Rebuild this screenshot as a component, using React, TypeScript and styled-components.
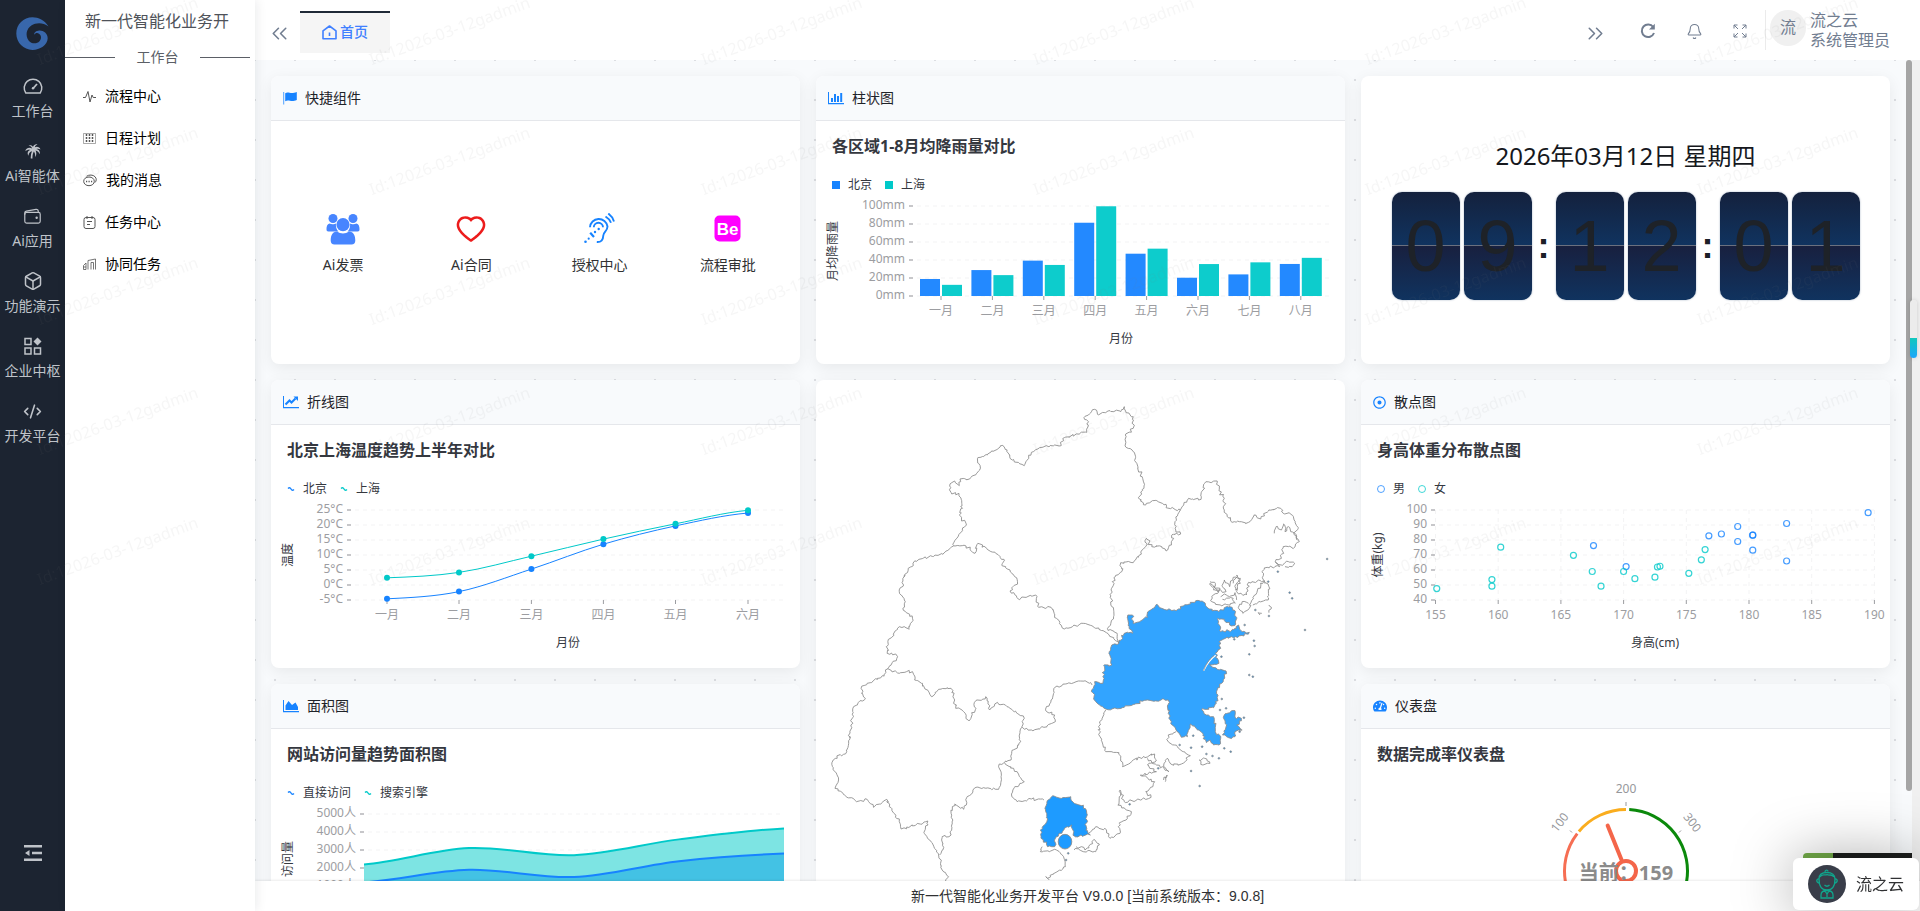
import React from "react";
import styled, { createGlobalStyle, css } from "styled-components";
import { AiOutlineHeart } from "react-icons/ai";
import { FaRegDotCircle, FaTachometerAlt } from "react-icons/fa";
import { IoWalletOutline } from "react-icons/io5";
import { Bell, Box, ChevronsLeft, ChevronsRight, CodeXml } from "lucide-react";

const BLUE = "#1783ff";
const TEAL = "#00c9c9";
const FONT = `"Noto Sans", "Noto Sans CJK SC", sans-serif`;

const GlobalStyle = createGlobalStyle`
  *, *::before, *::after { box-sizing: border-box; }
  html, body { margin: 0; padding: 0; overflow: hidden; }
  body { font-family: ${FONT}; font-size: 14px; line-height: 20px; color: #1f2329; background: #fff; }
  button { font: inherit; color: inherit; background: none; border: 0; padding: 0; cursor: pointer; }
  a { color: inherit; text-decoration: none; }
  h1, h2, h3, p, ul { margin: 0; padding: 0; font-weight: 400; }
  ul { list-style: none; }
`;

/* ---------- shell ---------- */

const Shell = styled.div`
  display: flex;
  height: 100vh;
`;

const Rail = styled.nav`
  flex: 0 0 65px;
  display: flex;
  flex-direction: column;
  align-items: center;
  background: #1c2431;
  color: #bfc3c9;
`;

const RailLogo = styled.a`
  display: flex;
  height: 76px;
  align-items: center;
  padding-bottom: 10px;
`;

const RailList = styled.ul`
  flex: 1;
  width: 100%;
`;

const RailLink = styled.a`
  display: flex;
  flex-direction: column;
  align-items: center;
  gap: 5px;
  height: 65px;
  white-space: nowrap;
`;

const RailIcon = styled.span`
  display: flex;
  align-items: center;
  justify-content: center;
  height: 20px;
`;

const FoldButton = styled.button`
  display: flex;
  padding-bottom: 50px;
`;

const SidePanel = styled.aside`
  position: relative;
  z-index: 2;
  flex: 0 0 190px;
  padding-right: 5px;
  background: #fff;
  box-shadow: 2px 0 10px rgba(0, 21, 41, 0.08);
`;

const PanelTitle = styled.h1`
  padding: 9px 20px;
  height: 46px;
  overflow: hidden;
  font-size: 16px;
  line-height: 24px;
  white-space: nowrap;
  color: #4e5259;
`;

const PanelDivider = styled.div`
  display: flex;
  align-items: center;
  justify-content: space-between;
  padding-top: 1px;
  color: #5b5f66;
  &::before,
  &::after {
    content: "";
    width: 50px;
    height: 1px;
    background: #5b5f66;
  }
`;

const PanelList = styled.ul`
  padding-top: 8px;
`;

const PanelLink = styled.a`
  display: flex;
  align-items: center;
  gap: 9px;
  height: 42px;
  padding-left: 18px;
  color: #000;
  svg { color: #555; }
`;

const Workspace = styled.div`
  flex: 1;
  min-width: 0;
  display: flex;
  flex-direction: column;
`;

const TopBar = styled.header`
  flex: 0 0 60px;
  display: flex;
  align-items: center;
  background: #fff;
  color: #717d90;
`;

const IconButton = styled.button<{ $width?: number }>`
  display: flex;
  align-items: center;
  justify-content: center;
  width: ${(p) => p.$width ?? 46}px;
  height: 60px;
  padding-top: 2px;
`;

const ScrollTabsButton = styled(IconButton)`
  padding: 6px 0 0 4px;
`;

const Tabs = styled.div`
  flex: 1;
  display: flex;
  align-self: stretch;
  padding-top: 11px;
`;

const Tab = styled.button`
  display: flex;
  align-items: center;
  justify-content: center;
  gap: 3px;
  width: 90px;
  height: 42px;
  padding-bottom: 2px;
  border-top: 2px solid #1f2937;
  background: #f5f5f5;
  color: #4080ff;
  font-weight: 500;
`;

const UserBox = styled.button`
  display: flex;
  align-items: flex-start;
  gap: 4px;
  width: 155px;
  height: 40px;
  margin-left: 2px;
  padding-left: 4px;
  border-left: 1px solid #ebebeb;
  font-size: 16px;
  line-height: 20px;
  text-align: left;
  white-space: nowrap;
`;

const UserInitial = styled.span`
  width: 36px;
  height: 36px;
  border-radius: 50%;
  background: #f0f0f0;
  line-height: 34px;
  text-align: center;
`;

const UserNames = styled.span`
  display: flex;
  flex-direction: column;
`;

const Viewport = styled.div`
  flex: 1;
  min-height: 0;
  display: flex;
`;

const Scroller = styled.main`
  flex: 1;
  min-width: 0;
  overflow: hidden;
  padding: 16px;
  background-color: #f8fafc;
  background-image: radial-gradient(circle, #dcdee2 1px, transparent 1px),
    radial-gradient(circle, #dcdee2 1px, transparent 1px);
  background-size: 40px 40px;
  background-position: -20px -20px, 0 0;
`;

const ScrollTrack = styled.div`
  flex: 0 0 6px;
  background: #f8fafc;
`;

const ScrollThumb = styled.div`
  height: 89%;
  border-radius: 3px;
  background: #a5a5a5;
`;

const OuterTrack = styled.div`
  flex: 0 0 8px;
  background: #f0f0f0;
`;

const Footer = styled.footer`
  position: relative;
  flex: 0 0 30px;
  background: #fff;
  box-shadow: 0 -1px 2px rgba(0, 0, 0, 0.08);
  font-family: "Liberation Sans", "Noto Sans CJK SC", sans-serif;
  line-height: 30px;
  text-align: center;
  color: #303133;
`;

/* ---------- cards ---------- */

const Board = styled.div`
  display: grid;
  grid-template-columns: repeat(3, minmax(0, 1fr));
  grid-auto-rows: 288px;
  gap: 16px;
`;

const Card = styled.section<{ $tall?: boolean }>`
  display: flex;
  flex-direction: column;
  overflow: hidden;
  border-radius: 8px;
  background: #fff;
  box-shadow: 0 4px 16px rgba(0, 0, 0, 0.07);
  ${(p) => p.$tall && css`grid-row: span 2;`}
`;

const CardHeader = styled.header`
  flex: 0 0 45px;
  display: flex;
  align-items: center;
  gap: 8px;
  padding: 0 12px;
  border-bottom: 1px solid #e5e7eb;
  background: #f8fafc;
  svg { color: ${BLUE}; }
`;

const CardName = styled.h2`
  font-size: 14px;
  line-height: 20px;
`;

const ChartBody = styled.div`
  padding-top: 14px;
`;

const ChartTitle = styled.h3`
  padding: 0 16px;
  font-size: 16px;
  line-height: 22px;
  font-weight: 700;
  color: #35383f;
`;

const Legend = styled.ul`
  display: flex;
  gap: 13px;
  height: 20px;
  margin: 18px 0 1px;
  padding: 0 16px;
  font-size: 12px;
  color: #35383f;
`;

const LegendItem = styled.li`
  display: flex;
  align-items: center;
  gap: 8px;
`;

const ChartSvg = styled.svg`
  display: block;
  width: 100%;
  height: auto;
  font-family: ${FONT};
  font-size: 12px;
`;

const Shortcuts = styled.ul`
  flex: 1;
  display: grid;
  grid-template-columns: repeat(4, 1fr);
  align-items: center;
  padding: 2px 8px 0;
`;

const Shortcut = styled.a`
  display: flex;
  flex-direction: column;
  align-items: center;
  gap: 10px;
  color: #303133;
`;

const ShortcutIcon = styled.span`
  display: flex;
  align-items: center;
  height: 32px;
`;

const ClockBody = styled.div`
  flex: 1;
  display: flex;
  flex-direction: column;
  align-items: center;
  justify-content: center;
  gap: 20px;
`;

const ClockDate = styled.h2`
  font-size: 24px;
  line-height: 32px;
  color: #16181d;
`;

const ClockRow = styled.div`
  display: flex;
  align-items: center;
  gap: 4px;
`;

const FlipDigit = styled.span`
  width: 68px;
  height: 108px;
  border-radius: 10px;
  background: linear-gradient(#14213d, #10335f 49%, #7c8290 49%, #5a6170 50%, #18203f 50%, #10335f);
  box-shadow: 0 0 2px rgba(16, 51, 95, 0.4);
  font-family: "Liberation Sans", sans-serif;
  font-size: 72px;
  line-height: 108px;
  text-align: center;
  color: #1e2228;
`;

const Colon = styled.span`
  width: 16px;
  font-family: "Liberation Sans", sans-serif;
  font-size: 36px;
  line-height: 36px;
  font-weight: 700;
  text-align: center;
  color: #1c2027;
`;

/* ---------- overlays ---------- */

const Watermark = styled.div`
  position: fixed;
  inset: 0;
  z-index: 5;
  overflow: hidden;
  pointer-events: none;
  display: grid;
  grid-template-columns: repeat(6, 332px);
  grid-auto-rows: 130px;
  color: rgba(128, 128, 128, 0.07);
  font-size: 16px;
  line-height: 20px;
`;

const WatermarkText = styled.span`
  padding: 49px 0 0 41px;
  white-space: nowrap;
  span {
    display: inline-block;
    transform: rotate(-20deg);
    transform-origin: left bottom;
  }
`;

const SideMeter = styled.div`
  position: fixed;
  top: 300px;
  right: 3px;
  z-index: 6;
  width: 7px;
  height: 58px;
  border-radius: 4px;
  background: linear-gradient(#ececec 38px, #12c8bd 38px, #1ba6fb);
  box-shadow: 0 0 4px rgba(0, 0, 0, 0.15);
`;

const ChatDock = styled.div`
  position: fixed;
  right: 1px;
  bottom: 1px;
  z-index: 7;
`;

const ChatProgress = styled.div`
  height: 5px;
  margin: 0 7px 0 10px;
  border-radius: 4px 0 0 0;
  background: linear-gradient(90deg, #74ad4a 30px, #1d1f1e 30px);
`;

const ChatButton = styled.button`
  display: flex;
  align-items: center;
  gap: 10px;
  width: 126px;
  height: 52px;
  padding-left: 15px;
  border-radius: 6px;
  background: #fff;
  box-shadow: 0 0 60px rgba(0, 0, 0, 0.36);
  font-size: 16px;
  color: #303133;
`;

/* ---------- icons ---------- */

const LogoIcon = () => (
  <svg width="33" height="33" viewBox="0 0 33 33" aria-hidden="true">
    <path
      fill="#3867ab"
      d="M32.500 9.500C28.500 3 22.500.3 16.500.3 7.500.3.300 7.500.300 16.500S7.500 32.900 16.500 32.900C23.800 32.900 31.500 28.500 31.700 21.300 31.600 16.200 27.500 13.300 23.200 13.500 20 13.700 17.900 15.600 18.200 17.800 19.200 15.900 21.500 15.700 23 16.700 25.600 18.300 25.600 21.700 23.500 24.200 20.700 27.300 15.300 27 12.600 23.400 9.200 18.500 10.300 12 15.300 8.600 20.500 5.300 27 5.500 32.500 9.500Z"
    />
  </svg>
);

const DashboardIcon = () => (
  <svg width="20" height="16" viewBox="0 0 20 16" fill="none" stroke="currentColor" strokeWidth="1.500" aria-hidden="true">
    <path d="M2.800 15A8.800 8.800 0 1 1 17.200 15Z" strokeLinejoin="round" />
    <path d="M10 10.500 14 6" strokeWidth="1.800" />
    <circle cx="10" cy="10.300" r="1.200" fill="currentColor" stroke="none" />
  </svg>
);

const PalmIcon = () => (
  <svg width="16" height="15" viewBox="0 0 16 15" aria-hidden="true">
    <path
      fill="currentColor"
      d="M7.200 4.500C6.500 2.500 5 1.800 3.500 1.800 4.800.8 7 1 8 2.800 8.700.7 10.800-.2 12.500.5 11 1 10.200 2 9.900 3.200 12 2 14.800 3 15.500 5.500 14 4.500 12.500 4.500 11.300 4.900 14 5.300 15.500 7.500 14.600 10.300 13.800 8 12.500 7 10.600 6.600 11.700 9 11.500 11.300 10.200 13.200 10.400 10.600 9.900 8.800 8.900 7.500 7.800 9.500 7.300 11.500 7.500 14.600H5.800C5.600 11.800 6 9.500 7 7.300 4.900 7.700 3.600 9.300 3.500 11.800 1.900 9.300 2.600 6.900 5.200 5.900 3.500 5.500 1.800 6 .4 7.300.4 4.400 4.200 2.900 7.200 4.500Z"
    />
  </svg>
);

const BlocksIcon = () => (
  <svg width="18" height="18" viewBox="0 0 18 18" fill="none" stroke="currentColor" strokeWidth="1.500" aria-hidden="true">
    <rect x="1" y="1.500" width="6" height="6" />
    <rect x="1" y="11" width="6" height="6" />
    <rect x="10.500" y="11" width="6" height="6" />
    <path d="M13.500.5 17.500 4.500 13.500 8.500 9.500 4.500Z" fill="currentColor" stroke="none" />
  </svg>
);

const FoldIcon = () => (
  <svg width="18" height="16" viewBox="0 0 18 16" fill="currentColor" aria-hidden="true">
    <path d="M0 0h18v2.500H0zM8 6.800h10v2.400H8zM0 13.500h18V16H0zM1 8l4.500-3v6z" />
  </svg>
);

const HomeIcon = () => (
  <svg width="15" height="15" viewBox="0 0 15 15" fill="none" stroke="currentColor" strokeWidth="1.600" aria-hidden="true">
    <path d="M1 5.800 7.500 1 14 5.800V13.800H1ZM7.500 7.500V11" strokeLinejoin="round" />
  </svg>
);

const RefreshIcon = () => (
  <svg width="16" height="16" viewBox="0 0 16 16" fill="none" aria-hidden="true">
    <path d="M13.200 4A6.300 6.300 0 1 0 14 10" stroke="currentColor" strokeWidth="2" />
    <path d="M14.800.8V6.500H9Z" fill="currentColor" />
  </svg>
);

const ExpandIcon = () => (
  <svg width="14" height="14" viewBox="0 0 14 14" fill="none" stroke="currentColor" aria-hidden="true">
    <path d="M4.500 1H1v3.500M1 1l4 4M9.500 1H13v3.500M13 1 9 5M4.500 13H1V9.500M1 13l4-4M9.500 13H13V9.500M13 13 9 9" />
  </svg>
);

const PulseIcon = () => (
  <svg width="13" height="13" viewBox="0 0 13 13" fill="none" stroke="currentColor" aria-hidden="true">
    <path d="M0 7.500h2.500L5 1.500 7 12 9 5l1.200 2.500H13" />
  </svg>
);

const CalendarGridIcon = () => (
  <svg width="13" height="13" viewBox="0 0 13 13" fill="none" stroke="currentColor" aria-hidden="true">
    <path d="M.5 1.500h12v10H.500z" strokeOpacity=".5" />
    <path d="M3.500 2v9M6.500 2v9M9.500 2v9" strokeDasharray="2 1" strokeWidth="1.500" />
  </svg>
);

const ChatIcon = () => (
  <svg width="14" height="13" viewBox="0 0 14 13" fill="none" stroke="currentColor" aria-hidden="true">
    <path d="M6 3C3 3 .700 4.800.700 7.300S3 11.700 6 11.700 11.300 9.800 11.300 7.300 9 3 6 3Z" />
    <path d="M3.500 2.300C6 .500 10 .600 12 2.700 13.800 4.600 13.500 7 12 8.500" />
    <path d="M3 7.500h1.200M5.500 7.500h1.200M8 7.500h1.200" strokeWidth="1.500" />
  </svg>
);

const TaskIcon = () => (
  <svg width="13" height="13" viewBox="0 0 13 13" fill="none" stroke="currentColor" aria-hidden="true">
    <rect x="1" y="1.500" width="11" height="11" rx="2" />
    <path d="M4 0v3M9 0v3M4 5.500h5M4 8.500h3" />
  </svg>
);

const TeamIcon = () => (
  <svg width="13" height="13" viewBox="0 0 13 13" fill="none" stroke="currentColor" strokeOpacity=".8" aria-hidden="true">
    <path d="M5 11.500v-9L12.500 1v10.500M8 11.500V4.500h2.500v7M.5 11.500V7.500L3 5v6.500zM.5 9h2.500" />
  </svg>
);

const FlagIcon = () => (
  <svg width="14" height="14" viewBox="0 0 14 14" fill="currentColor" aria-hidden="true">
    <path d="M.2 1h1v12.500h-1z" opacity=".75" />
    <path d="M2.200 2.200C5.500.3 7.500 3.600 13.800 1V9C8 11.600 6 8.200 2.200 10.200Z" />
  </svg>
);

const AxisIcon = ({ children }: { children: React.ReactNode }) => (
  <svg width="16" height="14" viewBox="0 0 16 14" fill="currentColor" aria-hidden="true">
    <path d="M0 1h1v11h15v1.200H0z" />
    {children}
  </svg>
);

const BarIcon = () => <AxisIcon><path d="M3 7h2v4H3zM6 3h2v8H6zM9 5h2v6H9zM12.200 2h2v9h-2z" /></AxisIcon>;
const LineIcon = () => (
  <AxisIcon>
    <path d="M2.500 9.500 6.500 5.500 8.500 7.500 12.500 3.500" fill="none" stroke="currentColor" strokeWidth="2" />
    <path d="M10.500 1.500H15V6Z" />
  </AxisIcon>
);
const AreaIcon = () => <AxisIcon><path d="M2.500 11V6.500L5.500 2 9 6 12.500 3.500 15 8V11Z" /></AxisIcon>;

const UsersIcon = () => (
  <svg width="34" height="32" viewBox="0 0 34 32" fill="#4785ff" aria-hidden="true">
    <circle cx="7" cy="5.500" r="4.500" />
    <circle cx="27" cy="5.500" r="4.500" />
    <path d="M3.500 10.500C6 12 9 11 10 10.500 9.500 14 10.500 16.500 12.500 18.500H2.500C.5 18.500.500 17 .5 16 .5 13.500 1.200 11.300 3.500 10.500ZM30.500 10.500C28 12 25 11 24 10.500 24.500 14 23.500 16.500 21.500 18.500H31.500C33.500 18.500 33.500 17 33.500 16 33.500 13.500 32.800 11.300 30.500 10.500Z" />
    <circle cx="17" cy="11.700" r="6.600" />
    <path d="M11 18.500C14.500 21 19.500 21 23 18.500 27.500 18.500 29.300 22.500 29.300 27.500 29.300 30 28 31.500 25.500 31.500H8.500C6 31.500 4.700 30 4.700 27.500 4.700 22.500 6.500 18.500 11 18.500Z" />
  </svg>
);

const EarIcon = () => (
  <svg width="31" height="31" viewBox="0 0 31 31" fill="none" stroke={BLUE} strokeWidth="1.900" aria-hidden="true">
    <path d="M6 14.300A8.800 8.800 0 0 1 23.500 13.500C23.500 18 19.500 19 19.300 22.500 19.200 27 17 29.300 12.800 29" />
    <path d="M9.800 14.300A4.600 4.600 0 0 1 19 14.300" />
    <path d="M6.200 19.800 10 24" strokeWidth="2.200" />
    <path d="M24.300.5C27 2.500 29 5 30 8.500M21.500 3.500C24 5 26 7 27 9.800" />
    <g fill={BLUE} stroke="none">
      <circle cx="1.500" cy="28.700" r="1.300" />
      <circle cx="4.700" cy="25.700" r="1.100" />
      <circle cx="11" cy="19" r="1.200" />
      <circle cx="14.700" cy="16" r="1.200" />
    </g>
  </svg>
);

const BehanceIcon = () => (
  <svg width="27" height="27" viewBox="0 0 27 27" aria-hidden="true">
    <rect x=".5" y=".5" width="26" height="26" rx="5" fill="#ff00ff" />
    <text x="13.500" y="20" textAnchor="middle" fill="#fff" fontFamily="Liberation Sans, sans-serif" fontWeight="700" fontSize="17">Be</text>
  </svg>
);

const AvatarIcon = () => (
  <svg width="38" height="38" viewBox="0 0 38 38" aria-hidden="true">
    <circle cx="19" cy="19" r="19" fill="#393d49" />
    <g fill="none" stroke="#10a58c" strokeWidth="1.300">
      <path d="M11 14C11 21 14 25 19 25S27 21 27 14C27 10 24 7.500 19 7.500S11 10 11 14Z" />
      <path d="M12 12C14 8 17 11 19 9.500 21 11 24 8.500 26 12M17 7C17 4.500 20 4.500 20 6.500M11 14C8 13.500 8 18 11.500 18M27 14C30 13.500 30 18 26.500 18M16.500 20C18 21.500 20 21.500 21.500 20" />
      <path d="M13 33V30C13 27 15.500 25.500 19 25.500S25 27 25 30V33ZM17 26 19 29 21 26M19 29V32" />
    </g>
  </svg>
);

/* ---------- charts ---------- */

const AXIS_TOP = 10;
const AXIS_BOTTOM = 100;

type Point = [number, number];

const smooth = (pts: Point[]) =>
  pts.reduce((d, [x, y], i) => {
    if (i === 0) return `M${x} ${y}`;
    const [px, py] = pts[i - 1];
    const before = pts[i - 2] ?? pts[i - 1];
    const after = pts[i + 1] ?? pts[i];
    const c1y = i === 1 ? py + (y - py) / 6 : py + (y - before[1]) / 6;
    const c2y = y - (after[1] - py) / 6;
    const dx = (x - px) / 3;
    return `${d}C${px + dx} ${c1y} ${x - dx} ${c2y} ${x} ${y}`;
  }, "");

interface FrameProps {
  labels: string[];
  left: number;
  xs: { x: number; label: string }[];
  xTitle: string;
  yTitle: string;
  titleX: number;
  verticalGrid?: boolean;
}

const Frame = ({ labels, left, xs, xTitle, yTitle, titleX, verticalGrid }: FrameProps) => (
  <g>
    {labels.map((label, i) => {
      const y = AXIS_TOP + ((AXIS_BOTTOM - AXIS_TOP) * i) / (labels.length - 1);
      return (
        <g key={label}>
          <path d={`M${left + 4} ${y}H513`} stroke="#f3f3f4" strokeDasharray="4 4" />
          <path d={`M${left - 4} ${y}H${left}`} stroke="#b4b5b8" strokeWidth="1.500" />
          <text x={left - 8} y={y + 3} textAnchor="end" fill="#9c9da1">{label}</text>
        </g>
      );
    })}
    {xs.map(({ x, label }) => (
      <g key={label}>
        {verticalGrid && <path d={`M${x} 10V100`} stroke="#f3f3f4" strokeDasharray="4 4" />}
        <path d={`M${x} 100V104`} stroke="#9c9da1" />
        <text x={x} y="119" textAnchor="middle" fill="#9c9da1">{label}</text>
      </g>
    ))}
    <text x={titleX} y="147" textAnchor="middle" fill="#35383f">{xTitle}</text>
    <text transform="translate(21 55) rotate(-90)" textAnchor="middle" fill="#35383f">{yTitle}</text>
  </g>
);

type MarkKind = "square" | "line" | "ring";

const Mark = ({ kind, color }: { kind: MarkKind; color: string }) => (
  <svg width="8" height="8" viewBox="0 0 8 8" aria-hidden="true">
    {kind === "square" && <path d="M0 0h8v8H0z" fill={color} />}
    {kind === "line" && <path d="M1 3.500C2.500 2 3.500 3 4 4S5.500 6 7 4.500" fill="none" stroke={color} strokeWidth="1.300" />}
    {kind === "ring" && <circle cx="4" cy="4" r="3.500" fill="none" stroke={color} strokeOpacity=".75" />}
  </svg>
);

const Series = ({ names, kind }: { names: [string, string]; kind: MarkKind }) => (
  <Legend>
    <LegendItem><Mark kind={kind} color={BLUE} />{names[0]}</LegendItem>
    <LegendItem><Mark kind={kind} color={TEAL} />{names[1]}</LegendItem>
  </Legend>
);

const MONTHS = ["一月", "二月", "三月", "四月", "五月", "六月", "七月", "八月"];
const BEIJING_RAIN = [18.9, 28.8, 39.3, 81.4, 47, 20.3, 24, 35.6];
const SHANGHAI_RAIN = [12.4, 23.2, 34.5, 99.7, 52.6, 35.5, 37.4, 42.4];

const RainChart = () => (
  <ChartSvg viewBox="0 0 529 160" role="img" aria-label="各区域1-8月均降雨量对比">
    <Frame
      labels={["100mm", "80mm", "60mm", "40mm", "20mm", "0mm"]}
      left={97}
      xs={MONTHS.map((label, i) => ({ x: 125 + i * 51.4, label }))}
      xTitle="月份"
      yTitle="月均降雨量"
      titleX={305}
    />
    {MONTHS.map((m, i) => {
      const a = BEIJING_RAIN[i] * 0.9;
      const b = SHANGHAI_RAIN[i] * 0.9;
      const x = 104 + i * 51.4;
      return (
        <g key={m} fillOpacity=".95">
          <rect x={x} y={AXIS_BOTTOM - a} width="20" height={a} fill={BLUE} />
          <rect x={x + 22} y={AXIS_BOTTOM - b} width="20" height={b} fill={TEAL} />
        </g>
      );
    })}
  </ChartSvg>
);

const TEMP_X = [116, 188, 260.4, 332.4, 404.5, 477];
const BEIJING_TEMP = [-4.6, -2.2, 5.3, 13.6, 19.7, 24];
const SHANGHAI_TEMP = [2.4, 4.2, 9.6, 15.3, 20.4, 24.9];

const TemperatureChart = () => (
  <ChartSvg viewBox="0 0 529 160" role="img" aria-label="北京上海温度趋势上半年对比">
    <Frame
      labels={["25°C", "20°C", "15°C", "10°C", "5°C", "0°C", "-5°C"]}
      left={80}
      xs={TEMP_X.map((x, i) => ({ x, label: MONTHS[i] }))}
      xTitle="月份"
      yTitle="温度"
      titleX={297}
    />
    {[{ data: BEIJING_TEMP, color: BLUE }, { data: SHANGHAI_TEMP, color: TEAL }].map(({ data, color }) => {
      const pts = data.map((v, i): Point => [TEMP_X[i], AXIS_BOTTOM - (v + 5) * 3]);
      return (
        <g key={color}>
          <path d={smooth(pts)} fill="none" stroke={color} />
          {pts.map(([x, y]) => <circle key={x} cx={x} cy={y} r="3" fill={color} />)}
        </g>
      );
    })}
  </ChartSvg>
);

const MEN: Point[] = [[167.6, 76.3], [170.2, 62.3], [176.8, 82.8], [177.8, 84], [179.1, 89], [179.1, 79], [180.3, 83.2], [180.3, 83.2], [180.3, 73.2], [183, 91], [183, 66], [189.5, 98.2]];
const WOMEN: Point[] = [[155.1, 47.6], [159.5, 53.6], [159.5, 49.2], [160.2, 75.2], [166, 69.8], [167.5, 59], [168.2, 49.2], [170, 59], [170.9, 54.2], [172.5, 55.2], [172.7, 62], [172.9, 62.5], [175.2, 57.8], [176.2, 66.8], [176.5, 73.6]];

const ScatterChart = () => (
  <ChartSvg viewBox="0 0 529 160" role="img" aria-label="身高体重分布散点图">
    <Frame
      labels={["100", "90", "80", "70", "60", "50", "40"]}
      left={74}
      xs={[155, 160, 165, 170, 175, 180, 185, 190].map((v) => ({ x: 74.5 + (v - 155) * 12.54, label: String(v) }))}
      xTitle="身高(cm)"
      yTitle="体重(kg)"
      titleX={294}
      verticalGrid
    />
    {[{ data: MEN, color: BLUE }, { data: WOMEN, color: TEAL }].map(({ data, color }) =>
      data.map(([h, w], i) => (
        <circle key={color + i} cx={74.5 + (h - 155) * 12.54} cy={AXIS_BOTTOM - (w - 40) * 1.5} r="3" fill="none" stroke={color} strokeOpacity=".8" strokeWidth="1.200" />
      ))
    )}
  </ChartSvg>
);

const VISIT_X = [93, 198, 303, 408, 513];
const SEARCH = [2200, 3110, 2710, 3590, 4200];
const DIRECT = [1200, 1900, 1500, 2380, 2800];

const VisitChart = () => {
  const toPoints = (data: number[]) => data.map((v, i): Point => [VISIT_X[i], AXIS_BOTTOM - v * 0.018]);
  const search = smooth(toPoints(SEARCH));
  const direct = smooth(toPoints(DIRECT));
  return (
    <ChartSvg viewBox="0 0 529 160" role="img" aria-label="网站访问量趋势面积图">
      <Frame
        labels={["5000人", "4000人", "3000人", "2000人", "1000人", "0人"]}
        left={93}
        xs={VISIT_X.map((x, i) => ({ x, label: MONTHS[i] }))}
        xTitle="月份"
        yTitle="访问量"
        titleX={305}
      />
      <path d={`${search}V100H93Z`} fill="#7de4e3" />
      <path d={`${direct}V100H93Z`} fill="#43c2e4" />
      <path d={search} fill="none" stroke={TEAL} strokeWidth="2" />
      <path d={direct} fill="none" stroke={BLUE} strokeWidth="2" />
    </ChartSvg>
  );
};

const polar = (deg: number, r: number) => {
  const a = (deg * Math.PI) / 180;
  return `${(265 + r * Math.cos(a)).toFixed(2)} ${(104 - r * Math.sin(a)).toFixed(2)}`;
};

const arc = (from: number, to: number) => `M${polar(from, 61.5)}A61.5 61.5 0 0 1 ${polar(to, 61.5)}`;

const GaugeChart = () => (
  <ChartSvg viewBox="0 -2 529 202" role="img" aria-label="数据完成率仪表盘">
    <g fill="none" strokeWidth="3">
      <path d={arc(193, 142.5)} stroke="#f66e53" />
      <path d={arc(140, 90)} stroke="#faad1e" />
      <path d={arc(87, -13)} stroke="#0b890b" />
    </g>
    <g stroke="#96979b">
      <path d="M265 35V39M209 63.500l2 2M320 63.500l-2 2" />
    </g>
    <g fill="#96979b" textAnchor="middle">
      <text x="265" y="26">200</text>
      <text transform="translate(202 58) rotate(-52)">100</text>
      <text transform="translate(328 58) rotate(52)">300</text>
    </g>
    <path d={`M${polar(112, 12)}L${polar(112, 49)}`} stroke="#f4664a" strokeWidth="4" strokeLinecap="round" />
    <circle cx="265" cy="104" r="10" fill="#fff" stroke="#f4664a" strokeWidth="4" />
    <text x="265" y="113" textAnchor="middle" fontSize="20" fontWeight="700" fill="#8b8b8b">当前：159</text>
  </ChartSvg>
);

/* ---------- map ---------- */

const parse = (s: string): Point[] => s.trim().split(/\s+/).map((p) => p.split(",").map(Number) as Point);

/* Breaks each straight run into small deterministic jags, so borders read as surveyed lines. */
const rough = (source: string, closed = false) => {
  const pts = parse(source);
  if (closed) pts.push(pts[0]);
  let seed = pts[0][0] * 31 + pts[0][1];
  const rnd = () => {
    seed = (seed * 16807 + 11) % 2147483647;
    return seed / 2147483647 - 0.5;
  };
  const out: Point[] = [pts[0]];
  for (let i = 1; i < pts.length; i++) {
    const [ax, ay] = pts[i - 1];
    const [bx, by] = pts[i];
    const len = Math.hypot(bx - ax, by - ay);
    const n = Math.max(1, Math.round(len / 6));
    for (let k = 1; k < n; k++) {
      const t = k / n;
      out.push([ax + (bx - ax) * t + rnd() * 8, ay + (by - ay) * t + rnd() * 8]);
    }
    out.push([bx, by]);
  }
  return out.map(([x, y], i) => `${i ? "L" : "M"}${x.toFixed(1)} ${y.toFixed(1)}`).join("") + (closed ? "Z" : "");
};

const NORTH_BORDERS = [
  "403,527 403,517 438,465 418,435 427,415 417,370 397,372 391,348 405,333 418,347 420,327 447,327 475,300 470,263 485,260 540,226 552,240 560,265 600,287 620,247 655,230 700,228 712,203 775,187 780,155 767,143 797,118 805,133 840,122 870,125 880,110 885,128 905,140 905,175 883,195 885,232 905,245 915,280 930,320 935,355 920,385 940,405 960,392 997,403 997,413 1037,420",
  "403,527 437,528 462,550 470,520 495,535 520,550 543,568 537,585 560,600 581,635 560,663 583,687 632,675 640,712 675,712 690,745 712,777 735,770 765,760 800,775 830,788 865,820",
  "1037,420 1022,455 1024,480 1038,492 1017,492 1012,525 997,543 985,530 957,530 942,505 940,530 905,578 870,578 873,605 855,620 843,660 845,710 850,740 833,775 860,790 865,820",
  "403,527 372,553 305,568 275,595 260,625 262,645 250,665 264,690 260,715 287,745 277,778 250,770 218,815 216,850 240,852 243,865 217,897",
  "1037,420 1060,385 1095,388 1105,340 1140,333 1145,362 1160,385 1160,420 1182,457 1228,457 1243,435 1262,447 1285,420 1318,415 1325,430 1345,432 1367,475 1355,490 1370,515 1355,533 1325,530 1320,565 1303,575 1315,590 1280,592 1265,605 1272,632 1228,637 1222,675 1200,672 1190,650 1205,625 1185,622 1175,650 1160,630 1155,650 1165,665 1140,660 1120,640 1130,660 1145,665 1125,680 1125,695 1150,705 1190,700 1185,685 1155,688",
  "1272,632 1285,650 1283,690 1260,695 1240,705",
  "1272,632 1245,675 1230,715 1212,730 1200,715 1210,695 1228,700",
  "1300,490 1305,470 1320,480 1325,462 1330,485 1340,470 1345,480 1357,490 1365,510",
  "1303,575 1320,585 1340,575 1357,580 1350,590 1330,590",
  "1120,635 1135,640 1130,650 1148,655 1140,665",
  "1150,680 1160,672 1175,680 1190,668 1195,690",
  "1185,640 1195,615 1205,640 1190,660",
  "1260,735 1255,728 1265,730",
  "1285,705 1292,712 1285,728",
];

const SOUTH_BORDERS = [
  "217,147 208,168 160,190 143,205 155,235 122,260 115,320 103,395 65,420 63,440 80,480 70,505 130,545 160,538 178,562 215,538 222,560 250,605 255,627 330,603 320,640 345,675 360,705 370,750 388,770 380,790",
  "217,147 250,160 270,155 287,155 293,180 315,190 340,230 360,208 395,205 405,240 408,265 430,275 445,303 465,265 460,248 492,230 503,270 525,247 560,265 600,295 593,322",
  "593,322 620,330 655,322 687,305 685,285 660,272 675,240 683,205 715,192 770,182 790,195",
  "593,322 585,375 565,395 563,420 530,432 535,470 528,508 465,502 440,530 430,568 405,552 395,580 400,600 395,645 370,650 372,690 363,705",
  "545,428 580,455 600,485 568,510 565,530 580,545 620,537 655,540",
  "828,270 808,320 812,350 828,395 865,398 875,440 905,420 965,402",
  "965,402 970,420 945,435 970,455 925,465 965,485 960,500 940,515 955,532 930,538 880,545 868,510 862,555 900,575 885,600 865,610 868,640 840,655 830,630 800,620 780,640",
  "945,415 970,435 1005,455 990,440 1000,415 1010,432 1040,432 1065,407 1045,395 1020,375 1000,360 1003,345 1025,335",
  "650,680 645,695 670,695 690,690 710,710 715,740 665,775 660,770 670,780",
  "740,690 760,680 770,690 795,658 810,675 800,695 765,695 745,680",
  "990,480 1000,465 995,485",
  "1090,420 1105,415 1120,430 1100,435 1090,420",
];

const BIG_REGION =
  "865,820 880,790 903,790 890,765 890,735 902,735 905,760 945,742 950,722 972,703 985,715 1020,720 1025,722 1045,708 1080,692 1098,693 1112,712 1145,725 1160,713 1182,712 1195,745 1192,762 1175,765 1160,748 1142,745 1150,785 1185,780 1200,765 1210,785 1230,787 1215,798 1180,800 1145,815 1150,835 1135,850 1145,880 1118,882 1128,892 1165,903 1157,935 1140,960 1138,1000 1130,1013 1097,1020 1110,1035 1130,1040 1135,1080 1150,1105 1145,1125 1130,1125 1120,1110 1110,1118 1095,1085 1065,1062 1057,1100 1040,1102 1025,1080 1010,1060 1003,1030 1003,990 945,990 880,1012 830,1018 800,995 788,965 797,935 820,940 822,887 845,885 838,845 845,825";
const ISLAND_REGION = "1160,1035 1175,1028 1190,1022 1190,1042 1208,1045 1195,1065 1210,1080 1190,1085 1190,1100 1172,1103 1155,1095 1165,1070 1158,1045";
const SMALL_REGION =
  "663,547 680,527 705,535 730,530 740,550 765,555 775,580 772,630 785,645 740,648 733,615 720,620 705,640 690,650 685,680 665,680 647,650 645,630 663,605 660,575";

const ISLETS = parse(
  "1448,567 1343,668 1350,685 1310,605 1283,635 1386,780 1217,765 1245,828 1230,853 1243,812 1230,915 1240,920 1152,860 1188,808 1247,720 1285,738 1153,987 1148,1020 1215,1043 1165,1015 1203,1085 1160,1135 1178,1145 1098,1130 1067,1133 1073,1097 1035,1125 1067,1203 1091,1248 1110,1152 1127,1158 1145,1165 975,1195 895,1303 723,1450 717,1470"
);

const MapChart = () => (
  <ChartSvg viewBox="0 0 529 592" role="img" aria-label="区域地图">
    <g transform="translate(-6 -10) scale(.35714 .33333)" fill="none" stroke="#8a8a8a" strokeWidth="2.500" strokeLinejoin="round">
      {NORTH_BORDERS.map((b) => <path key={b} d={rough(b)} />)}
      <path d={rough(BIG_REGION, true)} fill="#32a4ff" />
      <path d={rough(ISLAND_REGION, true)} fill="#32a4ff" />
      <path d="M1102 902C1110 885 1120 868 1136 856" stroke="#fff" strokeWidth="4" />
      <path d="M1102 902C1108 885 1115 870 1132 856" />
      {ISLETS.map(([x, y]) => <circle key={`${x}-${y}`} cx={x} cy={y} r="2.500" fill="#4a90c8" strokeWidth="2" />)}
      <g transform="translate(0 750)">
        {SOUTH_BORDERS.map((b) => <path key={b} d={rough(b)} />)}
        <path d={rough(SMALL_REGION, true)} fill="#1e9bff" />
        <ellipse cx="714" cy="665" rx="19" ry="22" fill="#1e9bff" />
      </g>
    </g>
  </ChartSvg>
);

/* ---------- page ---------- */

const RAIL_ITEMS = [
  { label: "工作台", icon: <DashboardIcon /> },
  { label: "Ai智能体", icon: <PalmIcon /> },
  { label: "Ai应用", icon: <IoWalletOutline size={19} /> },
  { label: "功能演示", icon: <Box size={20} strokeWidth={1.8} /> },
  { label: "企业中枢", icon: <BlocksIcon /> },
  { label: "开发平台", icon: <CodeXml size={19} strokeWidth={2} /> },
];

const PANEL_ITEMS = [
  { label: "流程中心", icon: <PulseIcon /> },
  { label: "日程计划", icon: <CalendarGridIcon /> },
  { label: "我的消息", icon: <ChatIcon /> },
  { label: "任务中心", icon: <TaskIcon /> },
  { label: "协同任务", icon: <TeamIcon /> },
];

const SHORTCUTS = [
  { label: "Ai发票", icon: <UsersIcon /> },
  { label: "Ai合同", icon: <AiOutlineHeart size={34} color="#ec1c1c" /> },
  { label: "授权中心", icon: <EarIcon /> },
  { label: "流程审批", icon: <BehanceIcon /> },
];

interface ChartCardProps {
  name: string;
  icon: React.ReactNode;
  title: string;
  series?: [string, string];
  mark?: MarkKind;
  children: React.ReactNode;
}

const ChartCard = ({ name, icon, title, series, mark = "line", children }: ChartCardProps) => (
  <Card>
    <CardHeader>{icon}<CardName>{name}</CardName></CardHeader>
    <ChartBody>
      <ChartTitle>{title}</ChartTitle>
      {series && <Series names={series} kind={mark} />}
      {children}
    </ChartBody>
  </Card>
);

export default function App() {
  return (
    <>
      <GlobalStyle />
      <Shell>
        <Rail>
          <RailLogo href="#" aria-label="首页"><LogoIcon /></RailLogo>
          <RailList>
            {RAIL_ITEMS.map((item) => (
              <li key={item.label}>
                <RailLink href="#"><RailIcon>{item.icon}</RailIcon>{item.label}</RailLink>
              </li>
            ))}
          </RailList>
          <FoldButton aria-label="收起菜单"><FoldIcon /></FoldButton>
        </Rail>

        <SidePanel>
          <PanelTitle>新一代智能化业务开</PanelTitle>
          <PanelDivider>工作台</PanelDivider>
          <PanelList>
            {PANEL_ITEMS.map((item) => (
              <li key={item.label}><PanelLink href="#">{item.icon}{item.label}</PanelLink></li>
            ))}
          </PanelList>
        </SidePanel>

        <Workspace>
          <TopBar>
            <ScrollTabsButton $width={45} aria-label="向左滚动"><ChevronsLeft size={25} strokeWidth={1.5} /></ScrollTabsButton>
            <Tabs><Tab><HomeIcon />首页</Tab></Tabs>
            <ScrollTabsButton $width={64} aria-label="向右滚动"><ChevronsRight size={25} strokeWidth={1.5} /></ScrollTabsButton>
            <IconButton aria-label="刷新"><RefreshIcon /></IconButton>
            <IconButton aria-label="通知"><Bell size={17} strokeWidth={1.5} /></IconButton>
            <IconButton aria-label="全屏"><ExpandIcon /></IconButton>
            <UserBox>
              <UserInitial>流</UserInitial>
              <UserNames><span>流之云</span><span>系统管理员</span></UserNames>
            </UserBox>
          </TopBar>

          <Viewport>
            <Scroller>
              <Board>
                <Card>
                  <CardHeader><FlagIcon /><CardName>快捷组件</CardName></CardHeader>
                  <Shortcuts>
                    {SHORTCUTS.map((s) => (
                      <li key={s.label}><Shortcut href="#"><ShortcutIcon>{s.icon}</ShortcutIcon>{s.label}</Shortcut></li>
                    ))}
                  </Shortcuts>
                </Card>
                <ChartCard name="柱状图" icon={<BarIcon />} title="各区域1-8月均降雨量对比" series={["北京", "上海"]} mark="square">
                  <RainChart />
                </ChartCard>
                <Card>
                  <ClockBody>
                    <ClockDate>2026年03月12日 星期四</ClockDate>
                    <ClockRow role="timer">
                      <FlipDigit>0</FlipDigit><FlipDigit>9</FlipDigit>
                      <Colon>:</Colon>
                      <FlipDigit>1</FlipDigit><FlipDigit>2</FlipDigit>
                      <Colon>:</Colon>
                      <FlipDigit>0</FlipDigit><FlipDigit>1</FlipDigit>
                    </ClockRow>
                  </ClockBody>
                </Card>
                <ChartCard name="折线图" icon={<LineIcon />} title="北京上海温度趋势上半年对比" series={["北京", "上海"]}>
                  <TemperatureChart />
                </ChartCard>
                <Card $tall><MapChart /></Card>
                <ChartCard name="散点图" icon={<FaRegDotCircle size={13} />} title="身高体重分布散点图" series={["男", "女"]} mark="ring">
                  <ScatterChart />
                </ChartCard>
                <ChartCard name="面积图" icon={<AreaIcon />} title="网站访问量趋势面积图" series={["直接访问", "搜索引擎"]}>
                  <VisitChart />
                </ChartCard>
                <ChartCard name="仪表盘" icon={<FaTachometerAlt size={14} />} title="数据完成率仪表盘">
                  <GaugeChart />
                </ChartCard>
              </Board>
            </Scroller>
            <ScrollTrack><ScrollThumb /></ScrollTrack>
            <OuterTrack />
          </Viewport>

          <Footer>新一代智能化业务开发平台 V9.0.0 [当前系统版本：9.0.8]</Footer>
        </Workspace>
      </Shell>

      <Watermark aria-hidden="true">
        {Array.from({ length: 30 }, (_, i) => (
          <WatermarkText key={i}><span>Id:12026-03-12gadmin</span></WatermarkText>
        ))}
      </Watermark>
      <SideMeter />
      <ChatDock>
        <ChatProgress />
        <ChatButton><AvatarIcon />流之云</ChatButton>
      </ChatDock>
    </>
  );
}
